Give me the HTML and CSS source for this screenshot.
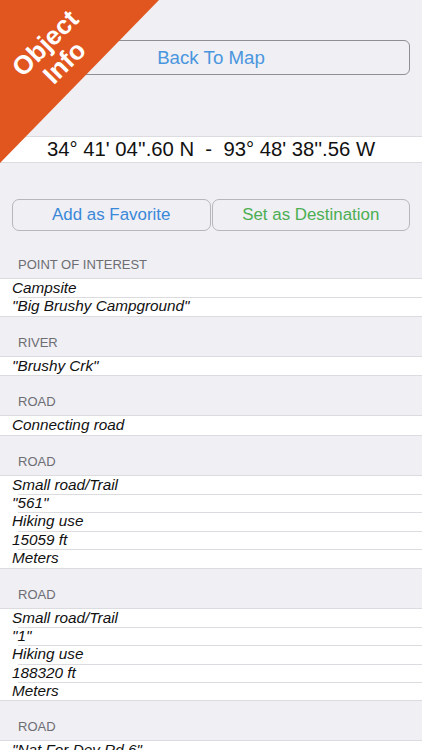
FILE: index.html
```html
<!DOCTYPE html>
<html lang="en">
<head>
<meta charset="utf-8">
<title>Object Info</title>
<link rel="stylesheet" href="styles.css">
</head>
<body>
<div class="page">
  <div class="top">
    <button class="btn-map">Back To Map</button>
  </div>
  <div class="coords">34° 41' 04''.60 N  -  93° 48' 38''.56 W</div>
  <div class="actions">
    <button class="btn fav">Add as Favorite</button>
    <button class="btn dest">Set as Destination</button>
  </div>

  <div class="hdr">POINT OF INTEREST</div>
  <div class="group">
    <div class="row">Campsite</div>
    <div class="row">"Big Brushy Campground"</div>
  </div>

  <div class="hdr">RIVER</div>
  <div class="group">
    <div class="row">"Brushy Crk"</div>
  </div>

  <div class="hdr">ROAD</div>
  <div class="group">
    <div class="row">Connecting road</div>
  </div>

  <div class="hdr">ROAD</div>
  <div class="group">
    <div class="row">Small road/Trail</div>
    <div class="row">"561"</div>
    <div class="row">Hiking use</div>
    <div class="row">15059 ft</div>
    <div class="row">Meters</div>
  </div>

  <div class="hdr">ROAD</div>
  <div class="group">
    <div class="row">Small road/Trail</div>
    <div class="row">"1"</div>
    <div class="row">Hiking use</div>
    <div class="row">188320 ft</div>
    <div class="row">Meters</div>
  </div>

  <div class="hdr">ROAD</div>
  <div class="group">
    <div class="row">"Nat For Dev Rd 6"</div>
  </div>
</div>

<div class="ribbon">
  <div class="ribbon-text">Object<br>Info</div>
</div>
</body>
</html>
```

FILE: styles.css
```css
* { box-sizing: border-box; }

html, body {
  margin: 0;
  padding: 0;
}

body {
  width: 422px;
  height: 750px;
  overflow: hidden;
  background: #efeff4;
  font-family: "Liberation Sans", Arial, sans-serif;
  position: relative;
}

.page {
  display: flex;
  flex-direction: column;
}

.top {
  padding: 40px 12px 0;
}

.btn-map {
  display: block;
  width: 100%;
  height: 35px;
  border: 1px solid #8e8e93;
  border-radius: 6px;
  background: transparent;
  color: #4a96de;
  font-family: inherit;
  font-size: 18.7px;
  padding: 0;
}

.coords {
  margin-top: 61px;
  height: 27px;
  background: #fff;
  border-top: 1px solid #dcdce0;
  border-bottom: 1px solid #dcdce0;
  text-align: center;
  white-space: pre;
  font-size: 20.3px;
  line-height: 25px;
  color: #111;
}

.actions {
  margin-top: 36px;
  margin-bottom: 8px;
  padding: 0 12px;
  display: grid;
  grid-template-columns: 1fr 1fr;
  gap: 1px;
}

.btn {
  height: 32px;
  border: 1px solid #b6b6bb;
  border-radius: 7px;
  background: transparent;
  font-family: inherit;
  font-size: 16.9px;
  padding: 0;
}

.fav { color: #3a88d8; }
.dest { color: #4cae52; }

.hdr {
  flex: none;
  height: 39px;
  padding: 19px 18px 0;
  font-size: 13px;
  line-height: 14px;
  color: #6d6d72;
}

.group {
  flex: none;
  background: #fff;
  border-top: 1px solid #dcdce0;
  border-bottom: 1px solid #dcdce0;
}

.row {
  height: 18.4px;
  padding-left: 12px;
  font-size: 15.3px;
  line-height: 18px;
  font-style: italic;
  color: #111;
  white-space: nowrap;
  background: linear-gradient(#dcdce0, #dcdce0) no-repeat 18px 0 / calc(100% - 18px) 1px;
}

.row:first-child {
  background: none;
}

.ribbon {
  position: absolute;
  top: 0;
  left: 0;
  width: 159px;
  height: 163px;
  background: #e1551f;
  clip-path: polygon(0 0, 100% 0, 0 100%);
}

.ribbon-text {
  position: absolute;
  left: 55px;
  top: 53px;
  transform: translate(-50%, -50%) rotate(-45deg);
  color: #fff;
  font-weight: bold;
  font-size: 26px;
  line-height: 27px;
  text-align: center;
  white-space: nowrap;
}
```
